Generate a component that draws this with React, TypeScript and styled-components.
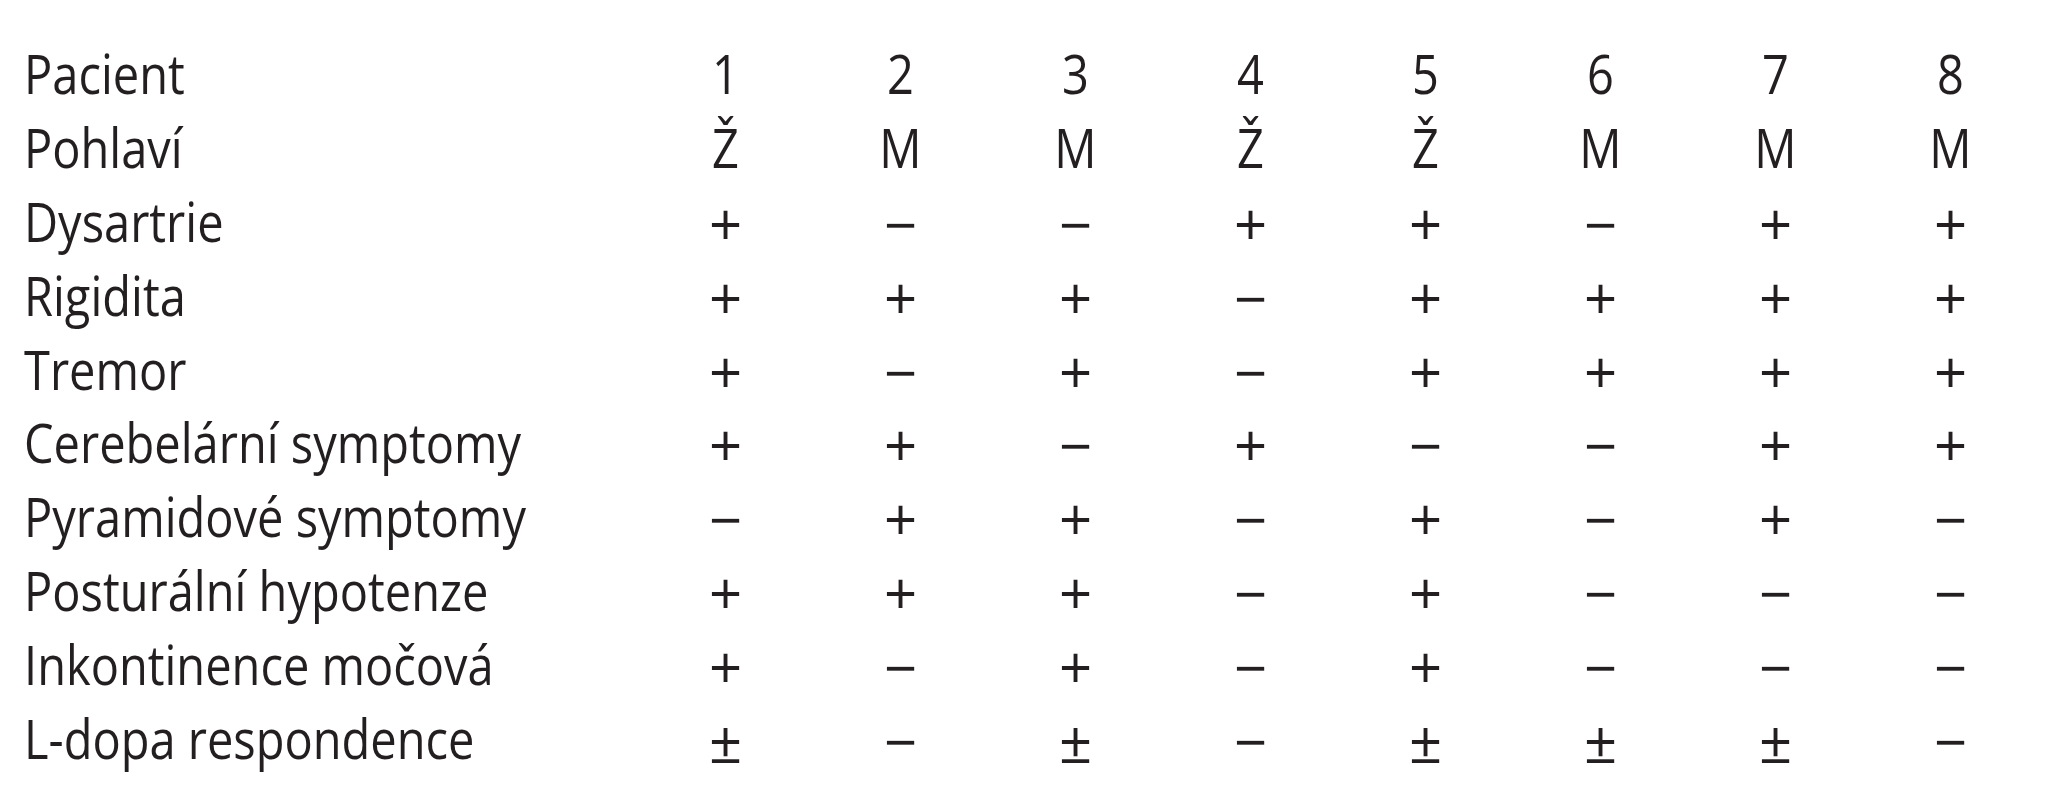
import React from "react";
import styled, { createGlobalStyle } from "styled-components";

const Global = createGlobalStyle`
  html, body { margin: 0; padding: 0; background: #ffffff; }
  body { font-family: "Open Sans", "Noto Sans", sans-serif; }
`;

const Table = styled.div`
  display: grid;
  grid-template-columns: 614px repeat(8, 175px);
  grid-auto-rows: 73.9px;
  padding: 36px 0 0 24px;
  color: #231f20;
  font-family: "Open Sans", "Noto Sans", sans-serif;
  font-weight: 400;
  font-size: 47px;
  line-height: 74px;
`;

const Cell = styled.div<{ $label?: boolean }>`
  text-align: ${(p) => (p.$label ? "left" : "center")};
  white-space: nowrap;
`;

const Glyphs = styled.span`
  display: inline-block;
  transform: scaleY(1.165);
  transform-origin: 50% 50%;
`;

const Sign = styled.span`
  display: inline-block;
  font-size: 58px;
  font-weight: 400;
  line-height: 74px;
  transform: translateY(3px);
`;

const rows: [string, string[]][] = [
  ["Pacient", ["1", "2", "3", "4", "5", "6", "7", "8"]],
  ["Pohlaví", ["Ž", "M", "M", "Ž", "Ž", "M", "M", "M"]],
  ["Dysartrie", ["+", "−", "−", "+", "+", "−", "+", "+"]],
  ["Rigidita", ["+", "+", "+", "−", "+", "+", "+", "+"]],
  ["Tremor", ["+", "−", "+", "−", "+", "+", "+", "+"]],
  ["Cerebelární symptomy", ["+", "+", "−", "+", "−", "−", "+", "+"]],
  ["Pyramidové symptomy", ["−", "+", "+", "−", "+", "−", "+", "−"]],
  ["Posturální hypotenze", ["+", "+", "+", "−", "+", "−", "−", "−"]],
  ["Inkontinence močová", ["+", "−", "+", "−", "+", "−", "−", "−"]],
  ["L-dopa respondence", ["±", "−", "±", "−", "±", "±", "±", "−"]],
];

const isSign = (v: string) => v === "+" || v === "−" || v === "±";

export default function App() {
  return (
    <>
      <Global />
      <Table>
        {rows.map(([label, vals]) => (
          <React.Fragment key={label}>
            <Cell $label>
              <Glyphs>{label}</Glyphs>
            </Cell>
            {vals.map((v, i) => (
              <Cell key={i}>
                {isSign(v) ? <Sign>{v}</Sign> : <Glyphs>{v}</Glyphs>}
              </Cell>
            ))}
          </React.Fragment>
        ))}
      </Table>
    </>
  );
}
